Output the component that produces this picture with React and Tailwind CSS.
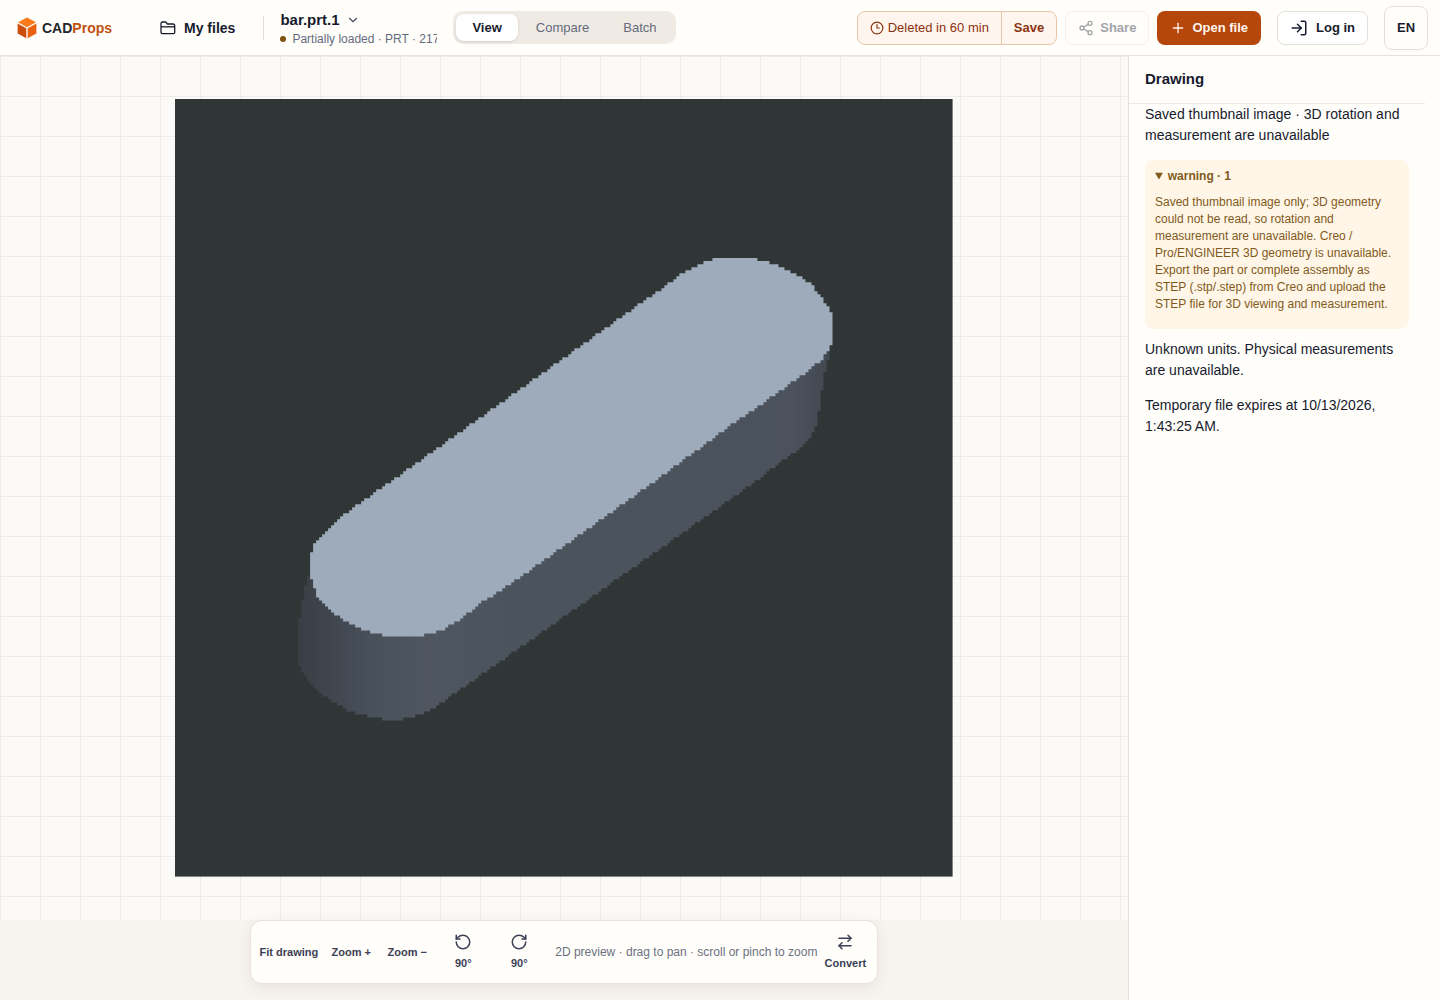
import React from 'react';
import { ArrowRightLeft, ChevronDown, Clock3, LogIn, Plus, RotateCcw, RotateCw, Share2 } from 'lucide-react';

// Part thumbnail: outlines are stored in thumbnail units, drawn on a coarse
// cell grid so the saved low-resolution preview keeps its stepped edge.
const SIZE = 777;
const CELL = 3;

const TOP_FACE = [
  [465, 204], [485, 191], [508, 173], [526, 164], [535, 161], [553, 158], [571, 158],
  [590, 162], [602, 166], [615, 172], [635, 184], [645, 196], [653, 209], [656, 215],
  [656, 245], [648, 259], [631, 273], [611, 287], [588, 304], [555, 326], [531, 344],
  [481, 381], [365, 464], [348, 476], [305, 504], [288, 518], [272, 528], [258, 534],
  [242, 537], [215, 537], [200, 534], [183, 528], [161, 516], [143, 498], [137, 483],
  [134, 469], [135, 458], [138, 447], [145, 437], [160, 422], [180, 407], [200, 393],
  [220, 379],
];

const SIDE_FACE = [
  [134, 476], [130, 488], [126, 508], [124, 524], [122, 538], [122, 562], [128, 574],
  [138, 587], [155, 601], [171, 610], [188, 616], [208, 620], [225, 620], [243, 616],
  [258, 609], [278, 595], [298, 581], [338, 553], [365, 534], [582, 381], [598, 368],
  [618, 354], [635, 338], [642, 324], [645, 301], [648, 278], [653, 258], [654, 246],
];

function steppedPath(points) {
  const rows = [];
  for (let y = 0; y < SIZE; y += CELL) {
    const mid = y + CELL / 2;
    const xs = [];
    points.forEach(([x1, y1], i) => {
      const [x2, y2] = points[(i + 1) % points.length];
      if (y1 <= mid !== y2 <= mid) xs.push(x1 + ((mid - y1) / (y2 - y1)) * (x2 - x1));
    });
    if (xs.length < 2) continue;
    const left = Math.round(Math.min(...xs) / CELL) * CELL;
    const right = Math.round(Math.max(...xs) / CELL) * CELL;
    rows.push(`M${left} ${y}H${right}V${y + CELL}H${left}Z`);
  }
  return rows.join('');
}

const TOP_PATH = steppedPath(TOP_FACE);
const SIDE_PATH = steppedPath(SIDE_FACE);

function PartThumbnail() {
  return (
    <svg viewBox="0 0 777 777" className="h-[90%] aspect-square max-w-full" role="img" aria-label="bar.prt.1">
      <defs>
        <linearGradient id="side" gradientUnits="userSpaceOnUse" x1="120" y1="0" x2="656" y2="0">
          <stop offset="0" stopColor="#383e43" />
          <stop offset="0.06" stopColor="#3f454d" />
          <stop offset="0.14" stopColor="#48505a" />
          <stop offset="0.25" stopColor="#4f5660" />
          <stop offset="0.4" stopColor="#4b535c" />
          <stop offset="0.93" stopColor="#4b525c" />
          <stop offset="1" stopColor="#40474f" />
        </linearGradient>
      </defs>
      <rect width="777" height="777" fill="#303636" />
      <path d={SIDE_PATH} fill="url(#side)" />
      <path d={TOP_PATH} fill="#9eabba" />
    </svg>
  );
}

function Logo() {
  return (
    <a href="#" className="flex items-center gap-1 text-sm font-bold text-[#25262b]">
      <svg width="22" height="22" viewBox="0 0 22 22" aria-hidden="true">
        <path d="M11 0.5 20 5.3 11 10.2 2 5.3Z" fill="#f97a1a" />
        <path d="M1.6 6.6 10.3 11.3V21.2L1.6 16.5Z" fill="#cd4d0c" />
        <path d="M20.4 6.6 11.7 11.3V21.2L20.4 16.5Z" fill="#ea6210" />
      </svg>
      <span>CAD<span className="text-[#c2500f]">Props</span></span>
    </a>
  );
}

function FolderIcon() {
  return (
    <svg width="16" height="16" viewBox="0 0 16 16" fill="none" stroke="currentColor" strokeWidth="1.3" strokeLinejoin="round" aria-hidden="true">
      <path d="M1 12.2V3.4A1.4 1.4 0 0 1 2.4 2H5.6L7.4 4H13.2A1.5 1.5 0 0 1 14.7 5.5V12.2A1.5 1.5 0 0 1 13.2 13.7H2.5A1.5 1.5 0 0 1 1 12.2Z" />
      <path d="M1 6.8H14.7" />
    </svg>
  );
}

function Header() {
  return (
    <header className="flex h-14 shrink-0 items-center border-b border-[#e9e2df] bg-[#fffefb] pl-4 pr-3">
      <Logo />
      <a href="#" className="ml-12 flex items-center gap-2 text-sm font-bold">
        <FolderIcon />
        My files
      </a>
      <div className="ml-7 h-6 w-px bg-[#e4dfdb]" />
      <div className="ml-4 w-[157px] overflow-hidden pt-0.5">
        <button type="button" className="flex items-center gap-1.5 text-[15px] leading-5 font-bold">
          bar.prt.1
          <ChevronDown size={14} strokeWidth={2} className="text-[#4b5060]" />
        </button>
        <p className="flex items-center gap-1.5 whitespace-nowrap text-xs leading-[18px] text-[#646a7c]">
          <span className="size-1.5 shrink-0 rounded-full bg-[#7d530f]" />
          Partially loaded · PRT · 217 KB
        </p>
      </div>
      <nav className="ml-4 flex gap-0.5 rounded-[10px] bg-[#efeae4] p-[3px] text-[13px] text-[#646a7c]">
        <button type="button" className="h-[27px] rounded-lg bg-white px-4 font-bold text-[#171b2d] shadow-sm">View</button>
        <button type="button" className="h-[27px] px-4">Compare</button>
        <button type="button" className="h-[27px] px-4">Batch</button>
      </nav>
      <div className="ml-auto flex items-center gap-2 text-[13px] font-bold">
        <div className="flex h-[34px] items-stretch overflow-hidden rounded-lg border border-[#e8c6aa] bg-[#fff5ef] text-[#8c3210]">
          <span className="flex items-center gap-1 px-3 font-normal">
            <Clock3 size={14} />
            Deleted in 60 min
          </span>
          <button type="button" className="border-l border-[#e8c6aa] px-3">Save</button>
        </div>
        <button type="button" disabled className="flex h-[34px] items-center gap-1.5 rounded-lg border border-[#f3f0ed] px-3 text-[#a3a4a9]">
          <Share2 size={16} />
          Share
        </button>
        <button type="button" className="flex h-[34px] items-center gap-1.5 rounded-lg bg-[#b5460c] px-[13px] text-[#fff5ec]">
          <Plus size={16} />
          Open file
        </button>
        <button type="button" className="ml-2 flex h-[34px] items-center gap-2 rounded-lg border border-[#e4dfdb] bg-white px-3">
          <LogIn size={18} />
          Log in
        </button>
        <button type="button" className="ml-2 size-11 rounded-lg border border-[#e4dfdb]">EN</button>
      </div>
    </header>
  );
}

function ToolButton({ icon: Icon, children }) {
  return (
    <button type="button" className="flex h-12 min-w-[52px] flex-col items-center justify-center gap-1 px-[3px] text-[11px] leading-4 font-bold whitespace-nowrap">
      {Icon && <Icon size={18} strokeWidth={2} />}
      {children}
    </button>
  );
}

function Toolbar() {
  return (
    <div className="flex h-20 shrink-0 items-start justify-center">
      <div className="relative flex h-16 items-center gap-1 rounded-xl border border-[#ebe2df] bg-[#fffefb] px-1.5 text-[#3b4054] shadow-[0_4px_16px_rgba(60,40,30,0.08)]">
        <ToolButton>Fit drawing</ToolButton>
        <ToolButton>Zoom +</ToolButton>
        <ToolButton>Zoom −</ToolButton>
        <ToolButton icon={RotateCcw}>90°</ToolButton>
        <ToolButton icon={RotateCw}>90°</ToolButton>
        <div className="flex items-center gap-0.5">
          <span className="pl-1.5 text-xs whitespace-nowrap text-[#6b7080]">
            2D preview · drag to pan · scroll or pinch to zoom
          </span>
          <ToolButton icon={ArrowRightLeft}>Convert</ToolButton>
        </div>
      </div>
    </div>
  );
}

function DrawingPanel() {
  return (
    <aside className="w-[312px] shrink-0 border-l border-[#e6dfdc] bg-[#fffefb] pr-[15px] text-sm leading-[21px]">
      <h2 className="flex h-12 items-center border-b border-[#ebe8e6] px-4 pb-0.5 text-[15px] font-bold">Drawing</h2>
      <div className="px-4">
        <p>Saved thumbnail image · 3D rotation and measurement are unavailable</p>
        <details open className="mt-3.5 rounded-lg bg-[#fff6e8] px-2.5 pt-2 pb-4 text-xs text-[#7f5a1b]">
          <summary className="leading-4 font-bold">warning · 1</summary>
          <p className="mt-2.5 leading-[17px]">
            Saved thumbnail image only; 3D geometry could not be read, so rotation and measurement are
            unavailable. Creo / Pro/ENGINEER 3D geometry is unavailable. Export the part or complete
            assembly as STEP (.stp/.step) from Creo and upload the STEP file for 3D viewing and
            measurement.
          </p>
        </details>
        <p className="mt-2.5">Unknown units. Physical measurements are unavailable.</p>
        <p className="mt-3.5">Temporary file expires at 10/13/2026, 1:43:25 AM.</p>
      </div>
    </aside>
  );
}

export default function App() {
  return (
    <div className="flex h-screen flex-col bg-[#f7f4ee] font-['Liberation_Sans',Arial,sans-serif] text-[#171b2d]">
      <Header />
      <div className="flex min-h-0 flex-1">
        <main className="flex min-w-0 flex-1 flex-col">
          <div className="flex min-h-0 flex-1 items-center justify-center bg-[#fbfaf8] bg-[linear-gradient(#eeecea_1px,transparent_1px),linear-gradient(90deg,#eeecea_1px,transparent_1px)] bg-[size:40px_40px]">
            <PartThumbnail />
          </div>
          <Toolbar />
        </main>
        <DrawingPanel />
      </div>
    </div>
  );
}
